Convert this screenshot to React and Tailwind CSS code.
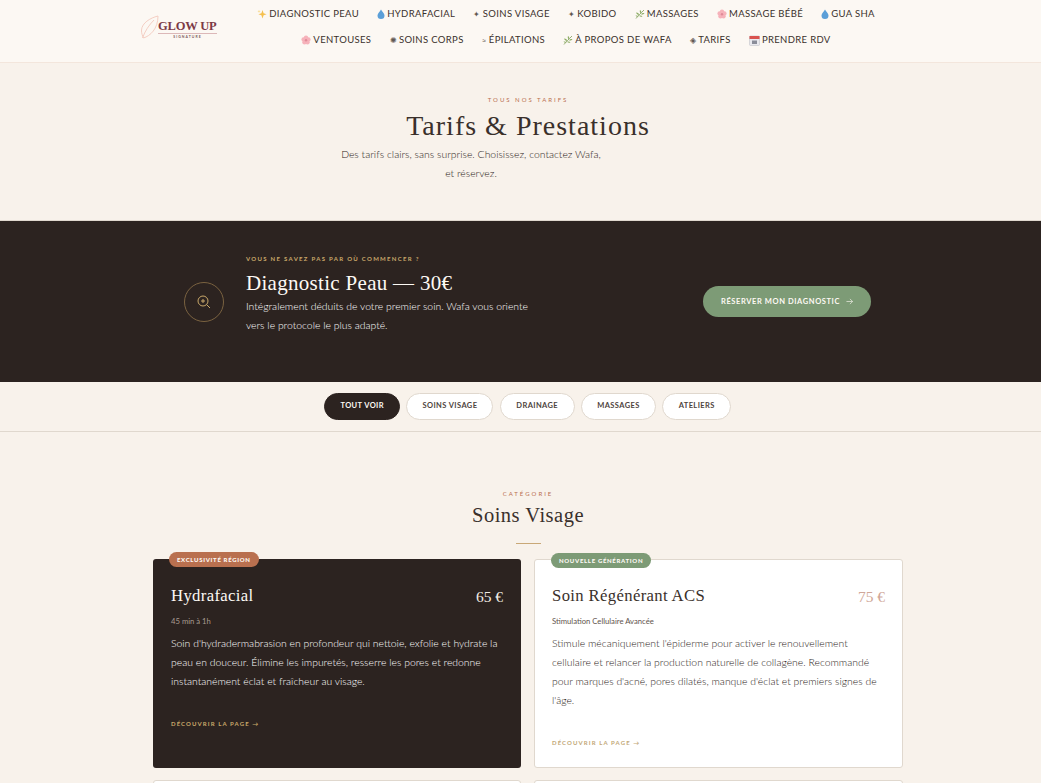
import React from "react";

const Sparkle = () => (
  <svg width="10" height="10" viewBox="0 0 10 10" className="shrink-0"><path d="M5.5 1 L6.6 4.2 L9.6 5.2 L6.6 6.2 L5.5 9.5 L4.4 6.2 L1.4 5.2 L4.4 4.2Z" fill="#f5c04e"/><path d="M2 .8l.5 1.2 1.1.4-1.1.4L2 4l-.5-1.200L.4 2.400l1.100-.4z" fill="#f8d98a"/></svg>
);
const Drop = () => (
  <svg width="8" height="10" viewBox="0 0 8 10" className="shrink-0"><path d="M4 .5C5 2.500 7.500 4.500 7.500 6.500A3.500 3.500 0 0 1 .5 6.500C.5 4.500 3 2.500 4 .5Z" fill="#5b9fd8"/></svg>
);
const Herb = () => (
  <svg width="10" height="10" viewBox="0 0 10 10" className="shrink-0"><path d="M1 9.500C3 7 5 5 9 1" stroke="#7d9a58" strokeWidth=".8" fill="none"/><path d="M5 1c1.500 1 1.500 2 1 3.500C4.800 3.800 4.500 2.500 5 1ZM1 3.500c1.800 0 3 .8 3.200 2.500C2.500 6 1.500 5 1 3.500ZM9.500 4C8.500 5.500 7.300 5.800 6 5.300 6.800 4.200 8 3.800 9.500 4ZM7.500 7.500C6.200 8 5 7.800 4 6.800 5.500 6.200 6.700 6.500 7.500 7.500ZM.5 6.500c1.300-.3 2.200 0 3 1-1.300.5-2.300.2-3-1Z" fill="#8cad63"/></svg>
);
const Blossom = () => (
  <svg width="10" height="10" viewBox="0 0 10 10" className="shrink-0"><g fill="#f6b2ba"><circle cx="5" cy="2.600" r="2.200"/><circle cx="2.600" cy="4.400" r="2.200"/><circle cx="7.400" cy="4.400" r="2.200"/><circle cx="3.500" cy="7.300" r="2.200"/><circle cx="6.500" cy="7.300" r="2.200"/></g><circle cx="5" cy="5.200" r="1.200" fill="#e08a98"/></svg>
);
const Calendar = () => (
  <svg width="11" height="11" viewBox="0 0 11 11" className="shrink-0"><rect x=".5" y="1" width="10" height="9.500" rx="1" fill="#e9e9ee" stroke="#b9bac2" strokeWidth=".5"/><rect x=".5" y="1" width="10" height="3" fill="#d9534f"/><rect x="3" y="5.500" width="5" height="3.500" fill="#8a8d99"/></svg>
);
const G = ({ c }) => <span className="text-[8px] leading-none text-[#3a302b] opacity-80 shrink-0">{c}</span>;

const row1 = [
  [<Sparkle />, "DIAGNOSTIC PEAU"],
  [<Drop />, "HYDRAFACIAL"],
  [<G c="✦" />, "SOINS VISAGE"],
  [<G c="✦" />, "KOBIDO"],
  [<Herb />, "MASSAGES"],
  [<Blossom />, "MASSAGE BÉBÉ"],
  [<Drop />, "GUA SHA"],
];
const row2 = [
  [<Blossom />, "VENTOUSES"],
  [<G c="✺" />, "SOINS CORPS"],
  [<G c="≈" />, "ÉPILATIONS"],
  [<Herb />, "À PROPOS DE WAFA"],
  [<G c="◈" />, "TARIFS"],
  [<Calendar />, "PRENDRE RDV"],
];

const NavRow = ({ items }) => (
  <div className="flex justify-center gap-[18.200px] h-[26px] items-center">
    {items.map(([icon, label]) => (
      <a key={label} className="flex items-center gap-[2px] text-[9.500px] tracking-[0.35px] text-[#3a302b] whitespace-nowrap">
        {icon}
        <span>{label}</span>
      </a>
    ))}
  </div>
);

const Logo = () => (
  <div className="relative w-[78px] h-[26px] shrink-0">
    <svg width="20" height="24" viewBox="0 0 20 24" className="absolute left-0 -top-[1px]" fill="none" stroke="#f3c9bd" strokeWidth=".9">
      <path d="M18 1C10 3 2 8 1.500 15c-.2 3 1 6 2 8C10 21 18 14 18 1Z" />
      <path d="M14 5C9 10 5 16 2.500 23" />
    </svg>
    <div className="absolute left-[18px] top-[3px] font-['Liberation_Serif',serif] font-bold text-[12.500px] leading-[14px] tracking-[-0.2px] text-[#7c3a46] whitespace-nowrap">GLOW UP</div>
    <div className="absolute left-[18px] top-[17px] w-[59px] h-px bg-[#dcb8b8]" />
    <div className="absolute left-[18px] top-[19px] w-[59px] text-center text-[3.500px] leading-[5px] tracking-[1px] font-bold text-[#7c5a5a] font-['Lato',sans-serif]">SIGNATURE</div>
  </div>
);

const Card = ({ dark, badge, badgeBg, title, price, sub, desc }) => (
  <div className={`relative rounded-[3px] pb-[19px] ${dark ? "bg-[#2c2320] px-[18px] pt-[25px]" : "bg-white border border-[#e0d8ce] px-[17px] pt-[24px]"}`}>
    <span className={`absolute left-[16px] -top-[7px] h-[15px] flex items-center px-[8px] rounded-full text-[6px] font-black tracking-[0.68px] text-[#fdf9f4] whitespace-nowrap ${badgeBg}`}>{badge}</span>
    <div className="flex justify-between items-start">
      <h3 className={`font-['Liberation_Serif',serif] text-[16.700px] leading-[24px] tracking-[0.35px] ${dark ? "text-[#fdf9f4]" : "text-[#3a302b]"}`}>{title}</h3>
      <span className={`font-['Liberation_Serif',serif] text-[15.500px] leading-[26px] ${dark ? "text-[#f3ece4]" : "text-[#d0a798]"}`}>{price}</span>
    </div>
    <p className={`mt-[5px] text-[7.700px] leading-[12px] ${dark ? "text-[#a89c90]" : "text-[#5f544d]"}`}>{sub}</p>
    <p className={`mt-[7px] text-[10.400px] leading-[19px] font-light ${dark ? "text-white" : "text-[#2c2320]"}`}>{desc}</p>
    <a className={`block mt-[28px] text-[6px] font-bold tracking-[1.100px] leading-[10px] ${dark ? "text-[#c9a86a]" : "text-[#c2a878]"}`}>DÉCOUVRIR LA PAGE →</a>
  </div>
);

export default function App() {
  return (
    <div className="w-full h-[783px] overflow-hidden bg-[#f8f2eb]">
      <div className="w-[1056px] font-['Lato',sans-serif]">
        <header className="h-[63px] bg-[#fcf8f3] border-b border-[#f3e6dc] flex pl-[140px]">
          <div className="pt-[16px]"><Logo /></div>
          <nav className="ml-[28px] w-[640px] pt-[1px]">
            <NavRow items={row1} />
            <NavRow items={row2} />
          </nav>
        </header>

        <section className="h-[158px] pt-[32px] text-center border-b border-[#e0d8ce]">
          <p className="text-[6px] leading-[9px] tracking-[2px] text-[#b96f4f]">TOUS NOS TARIFS</p>
          <h1 className="mt-[2px] font-['Liberation_Serif',serif] text-[28px] leading-[40px] tracking-[1px] text-[#3a302b]">Tarifs &amp; Prestations</h1>
          <p className="w-[266px] ml-[338px] -mt-[1.500px] text-[10.400px] leading-[19px] font-light text-[#2c2320]">Des tarifs clairs, sans surprise. Choisissez, contactez Wafa, et réservez.</p>
        </section>

        <section className="h-[161px] bg-[#2c2320] flex items-center pl-[184px] pr-[185px]">
          <div className="w-[40px] h-[40px] rounded-full border border-[#7a6240] flex items-center justify-center shrink-0">
            <svg width="14" height="14" viewBox="0 0 14 14" fill="none" stroke="#c9a86a" strokeWidth="1"><circle cx="6" cy="6" r="5" /><path d="M9.700 9.700L13 13M6 4v4M4 6h4" /></svg>
          </div>
          <div className="ml-[22px] flex-1 pb-[15px]">
            <p className="text-[6px] font-bold leading-[9px] tracking-[1.300px] text-[#c9a86a]">VOUS NE SAVEZ PAS PAR OÙ COMMENCER ?</p>
            <h2 className="mt-[6px] font-['Liberation_Serif',serif] text-[21px] leading-[28px] tracking-[0.3px] text-[#fdf9f4]">Diagnostic Peau — 30€</h2>
            <p className="mt-[0px] w-[292px] text-[10.400px] leading-[19px] font-light text-white">Intégralement déduits de votre premier soin. Wafa vous oriente vers le protocole le plus adapté.</p>
          </div>
          <a className="w-[168px] h-[31px] rounded-full bg-[#7d9b76] flex items-center justify-center gap-[6px] text-[7.500px] font-bold tracking-[0.6px] text-[#fdf9f4] whitespace-nowrap">
            RÉSERVER MON DIAGNOSTIC
            <svg width="7" height="7" viewBox="0 0 8 8" fill="none" stroke="#fdf9f4" strokeWidth=".7"><path d="M.5 4h7M4.500 1l3 3-3 3" /></svg>
          </a>
        </section>

        <section className="h-[50px] border-b border-[#e0d8ce] flex justify-center items-center gap-[6.250px] pb-[1px] pr-[0.600px]">
          <span className="w-[76px] h-[27px] rounded-full bg-[#2c2320] border border-[#2c2320] flex items-center justify-center text-[7.500px] font-bold tracking-[0.4px] text-[#fdf9f4]">TOUT VOIR</span>
          {[["SOINS VISAGE", "w-[87px]"], ["DRAINAGE", "w-[75px]"], ["MASSAGES", "w-[75px]"], ["ATELIERS", "w-[69px]"]].map(([t, w]) => (
            <span key={t} className={`${w} h-[27px] rounded-full bg-white border border-[#e0d8ce] flex items-center justify-center text-[7.500px] font-bold tracking-[0.4px] text-[#4d433c]`}>{t}</span>
          ))}
        </section>

        <section className="pt-[57px] text-center">
          <p className="text-[6px] leading-[9px] tracking-[2px] text-[#b96f4f]">CATÉGORIE</p>
          <h2 className="mt-[2px] font-['Liberation_Serif',serif] text-[20.500px] leading-[30px] tracking-[0.5px] text-[#3a302b]">Soins Visage</h2>
          <div className="mx-auto mt-[13px] w-[25px] h-px bg-[#c9a877]" />
          <div className="mt-[15px] ml-[153px] w-[750px] grid grid-cols-[368px_369px] gap-x-[13px] gap-y-[12px] text-left">
            <Card dark badge="EXCLUSIVITÉ RÉGION" badgeBg="bg-[#b9704f]" title="Hydrafacial" price="65 €" sub="45 min à 1h"
              desc="Soin d'hydradermabrasion en profondeur qui nettoie, exfolie et hydrate la peau en douceur. Élimine les impuretés, resserre les pores et redonne instantanément éclat et fraîcheur au visage." />
            <Card badge="NOUVELLE GÉNÉRATION" badgeBg="bg-[#7d9b76]" title="Soin Régénérant ACS" price="75 €" sub="Stimulation Cellulaire Avancée"
              desc="Stimule mécaniquement l'épiderme pour activer le renouvellement cellulaire et relancer la production naturelle de collagène. Recommandé pour marques d'acné, pores dilatés, manque d'éclat et premiers signes de l'âge." />
            <div className="h-[60px] bg-white border border-[#e0d8ce] rounded-[3px]" />
            <div className="h-[60px] bg-white border border-[#e0d8ce] rounded-[3px]" />
          </div>
        </section>
      </div>
    </div>
  );
}
